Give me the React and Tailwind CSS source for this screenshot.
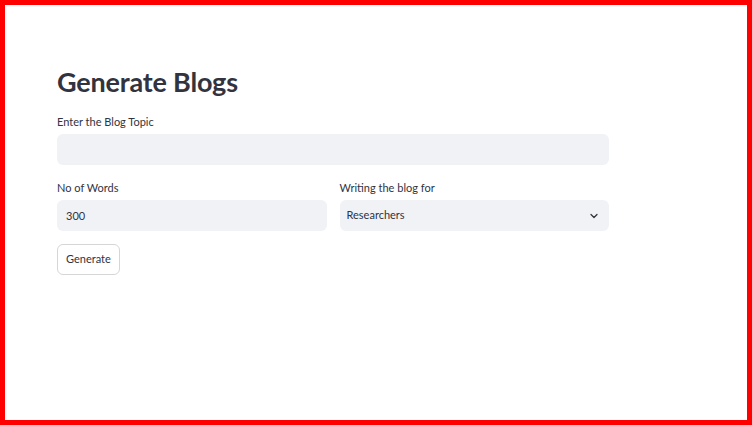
import { useState } from "react";

function Field({ label, children }) {
  return (
    <div className="flex flex-col">
      <label className="text-[11px] text-[#31333f] mb-[4px] leading-[16px]">{label}</label>
      {children}
    </div>
  );
}

export default function App() {
  const [topic, setTopic] = useState("");
  const [words, setWords] = useState("300");

  return (
    <div
      className="w-[752px] h-[425px] border-[5px] border-[#ff0000] bg-white text-[#31333f] overflow-hidden"
      style={{ fontFamily: "Lato, 'Noto Sans', sans-serif" }}
    >
      <div className="w-[552px] ml-[52px] pt-[59px] flex flex-col">
        <h1 className="text-[27px] font-bold leading-[36px] mb-[14px] tracking-[-0.2px]">Generate Blogs</h1>

        <Field label="Enter the Blog Topic">
          <input
            value={topic}
            onChange={(e) => setTopic(e.target.value)}
            className="h-[31px] rounded-[6px] bg-[#f0f2f6] px-[9px] text-[11px] outline-none"
          />
        </Field>

        <div className="grid grid-cols-2 gap-[13px] mt-[15px]">
          <Field label="No of Words">
            <input
              value={words}
              onChange={(e) => setWords(e.target.value)}
              className="h-[31px] rounded-[6px] bg-[#f0f2f6] px-[9px] text-[11px] outline-none"
            />
          </Field>
          <Field label="Writing the blog for">
            <div className="h-[31px] rounded-[6px] bg-[#f0f2f6] px-[7px] flex items-center justify-between text-[11px]">
              <span>Researchers</span>
              <svg width="12" height="12" viewBox="0 0 24 24" fill="none" stroke="#31333f" strokeWidth="2.5" strokeLinecap="round" strokeLinejoin="round" className="mr-[2px]">
                <path d="M6 9l6 6 6-6" />
              </svg>
            </div>
          </Field>
        </div>

        <div className="mt-[13px]">
          <button className="h-[31px] px-[8px] rounded-[6px] border border-[#d6d6d9] bg-white text-[11px]">
            Generate
          </button>
        </div>
      </div>
    </div>
  );
}
